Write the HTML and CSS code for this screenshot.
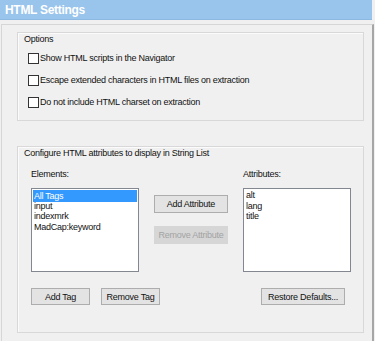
FILE: index.html
```html
<!DOCTYPE html>
<html>
<head>
<meta charset="utf-8">
<link rel="stylesheet" href="styles.css">
</head>
<body>
<div class="title">HTML Settings</div>
<div class="panel">
  <div class="group options">
    <div class="legend">Options</div>
    <div class="checks">
      <label class="check"><span class="box"></span><span>Show HTML scripts in the Navigator</span></label>
      <label class="check"><span class="box"></span><span>Escape extended characters in HTML files on extraction</span></label>
      <label class="check"><span class="box"></span><span>Do not include HTML charset on extraction</span></label>
    </div>
  </div>
  <div class="group attrs">
    <div class="legend">Configure HTML attributes to display in String List</div>
    <div class="cols">
      <div class="col">
        <div class="lbl">Elements:</div>
        <div class="list">
          <div class="item sel">All Tags</div>
          <div class="item">input</div>
          <div class="item">indexmrk</div>
          <div class="item">MadCap:keyword</div>
        </div>
      </div>
      <div class="mid">
        <div class="btn wide">Add Attribute</div>
        <div class="btn wide disabled">Remove Attribute</div>
      </div>
      <div class="col">
        <div class="lbl">Attributes:</div>
        <div class="list">
          <div class="item">alt</div>
          <div class="item">lang</div>
          <div class="item">title</div>
        </div>
      </div>
    </div>
    <div class="bottom">
      <div class="btn tag">Add Tag</div>
      <div class="btn tag">Remove Tag</div>
      <div class="btn restore">Restore Defaults...</div>
    </div>
  </div>
</div>
</body>
</html>
```
FILE: styles.css
```css
* { box-sizing: border-box; }
html, body { margin: 0; padding: 0; }
body {
  background: #f0f0f0;
  font-family: "Liberation Sans", Arial, sans-serif;
  font-size: 9px;
  letter-spacing: -0.25px;
  color: #111;
  width: 375px;
  height: 341px;
  overflow: hidden;
  white-space: nowrap;
}
.title {
  width: 372px;
  height: 20px;
  background: #99c4ec;
  border-bottom: 1px solid #8db8e2;
  color: #fff;
  font-weight: bold;
  font-size: 12px;
  letter-spacing: -0.3px;
  line-height: 20px;
  padding-left: 5px;
}
.panel {
  margin-top: 4px;
  margin-left: 1px;
  width: 373px;
  height: 330px;
  border-top: 1px solid #d6d6d6;
  border-left: 1px solid #d6d6d6;
  border-right: 2px solid #a6a6a6;
  padding: 7px 0 0 15px;
}
.group {
  width: 347px;
  border: 1px solid #d8d8d8;
  box-shadow: inset 1px 1px 0 #fbfbfb;
}
.options { height: 89px; }
.attrs { height: 187px; margin-top: 25px; padding-left: 13px; }
.legend { line-height: 12px; margin-left: 6px; }
.attrs .legend { margin-left: -7px; margin-top: 0; }
.checks {
  display: flex;
  flex-direction: column;
  gap: 10px;
  margin-top: 7px;
  margin-left: 10px;
}
.check {
  display: flex;
  align-items: center;
  height: 12px;
  gap: 1px;
}
.box {
  width: 11px;
  height: 11px;
  border: 1px solid #333;
  background: #fff;
}
.cols {
  display: flex;
  gap: 15px;
  margin-top: 9px;
}
.col { width: 108px; }
.lbl { line-height: 12px; height: 12px; }
.list {
  margin-top: 8px;
  height: 84px;
  background: #fff;
  border: 1px solid #828790;
  padding: 1px;
}
.item { line-height: 10.5px; height: 10.5px; padding-left: 1px; }
.item.sel { background: #3399ff; color: #fff; height: 12px; line-height: 12px; margin-bottom: -1.5px; }
.mid {
  width: 74px;
  padding-top: 27px;
  display: flex;
  flex-direction: column;
  gap: 13px;
}
.btn {
  height: 17px;
  background: #e3e3e3;
  border: 1px solid #adadad;
  display: flex;
  align-items: center;
  justify-content: center;
  color: #111;
}
.btn.wide { height: 18px; }
.btn.disabled {
  background: #d6d6d6;
  border-color: #d6d6d6;
  color: #a3a3a3;
}
.bottom {
  display: flex;
  gap: 11px;
  margin-top: 16px;
  padding-right: 18px;
}
.tag { width: 59px; }
.restore { width: 84px; margin-left: auto; }
```
